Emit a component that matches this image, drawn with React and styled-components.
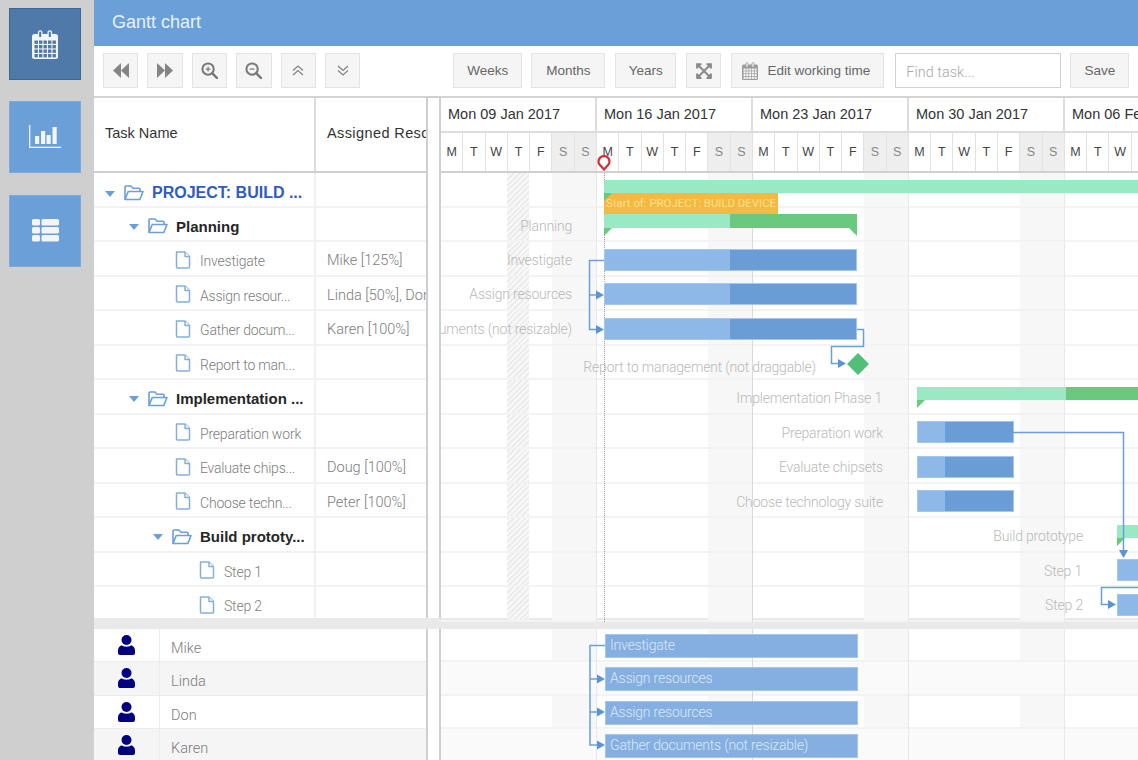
import React from "react";
import styled, { createGlobalStyle } from "styled-components";
import { FaExpandArrowsAlt } from "react-icons/fa";

const LIGHT_FONT = `"Roboto", "Liberation Sans", Arial, sans-serif`;

const GlobalStyle = createGlobalStyle`
  html, body { margin: 0; padding: 0; height: 100%; overflow: hidden; }
  body { font-family: "Liberation Sans", Arial, sans-serif; background: #fff; }
`;

const Page = styled.div`
  display: flex;
  width: 1138px;
  height: 760px;
  overflow: hidden;
`;
const Sidebar = styled.nav`
  width: 94px;
  flex: none;
  background: #cfcfcf;
  padding: 8px 0 0 9px;
  box-sizing: border-box;
  display: flex;
  flex-direction: column;
  gap: 21.3px;
`;
const SideButton = styled.button`
  width: 72px;
  height: 72px;
  padding: 0;
  display: flex;
  align-items: center;
  justify-content: center;
  color: #f2f5f9;
  background: ${(p) => (p.$active ? "#4f79a8" : "#6a9fd8")};
  border: 1px solid ${(p) => (p.$active ? "#3f6593" : "#7fa9da")};
  box-sizing: border-box;
`;
const Main = styled.main`
  flex: 1;
  min-width: 0;
  display: flex;
  flex-direction: column;
`;
const Header = styled.header`
  height: 46px;
  flex: none;
  background: #6a9fd8;
  color: #e9f1fa;
  font-size: 18px;
  line-height: 44px;
  padding-left: 18px;
`;
const Toolbar = styled.div`
  height: 50px;
  flex: none;
  box-sizing: border-box;
  padding: 7px 9px 0 9px;
  display: flex;
  align-items: flex-start;
`;
const ToolButton = styled.button`
  height: 35px;
  width: ${(p) => p.$w || 35.4}px;
  margin-right: ${(p) => (p.$gap === undefined ? 9 : p.$gap)}px;
  padding: 0 ${(p) => p.$pad || 0}px 0 0;
  display: inline-flex;
  align-items: center;
  justify-content: center;
  gap: 9px;
  background: #f5f5f5;
  border: 1px solid #e3e3e3;
  color: #666;
  font: 13.5px "Liberation Sans", Arial, sans-serif;
  box-sizing: border-box;
  flex: none;
`;
const Spacer = styled.div`
  width: 84px;
  flex: none;
`;
const Search = styled.input`
  width: 166px;
  height: 35px;
  margin: 0 9px 0 1px;
  box-sizing: border-box;
  border: 1.5px solid #d2d2d2;
  padding: 3px 10px 0;
  font: 300 14.5px ${LIGHT_FONT};
  background: #fff;
  outline: none;
  flex: none;
  &::placeholder { color: #a8a8a8; opacity: 1; }
`;

const Upper = styled.div`
  display: grid;
  grid-template-columns: 332px 15px 1fr;
  height: 522px;
  flex: none;
`;
const Lower = styled.div`
  display: grid;
  grid-template-columns: 332px 15px 1fr;
  flex: 1;
  min-height: 0;
`;
const Band = styled.div`
  height: 11px;
  flex: none;
  background: #e9e9e9;
`;
const Splitter = styled.div`
  border-left: 2px solid #cfcfcf;
  border-right: 2px solid #cfcfcf;
  border-top: ${(p) => (p.$top ? "2px solid #cfcfcf" : "none")};
  box-sizing: border-box;
  background: #fff;
  width: 15px;
`;
const Table = styled.div`
  display: flex;
  flex-direction: column;
  min-width: 0;
`;
const TableHead = styled.div`
  display: flex;
  height: 77px;
  flex: none;
  box-sizing: border-box;
  border-top: 2px solid #d4d4d4;
  border-bottom: 2px solid #cfcfcf;
`;
const HeadCell = styled.div`
  width: ${(p) => p.$w}px;
  flex: none;
  box-sizing: border-box;
  padding-left: 11px;
  padding-bottom: 3px;
  display: flex;
  align-items: center;
  white-space: nowrap;
  overflow: hidden;
  font-size: 14.5px;
  letter-spacing: ${(p) => p.$track || 0}px;
  color: #333;
  border-right: ${(p) => (p.$line ? "2px solid #dcdcdc" : "none")};
`;
const Row = styled.div`
  display: flex;
  height: 34.5px;
  flex: none;
  box-sizing: border-box;
  border-bottom: 2px solid #f2f2f2;
`;
const NameCell = styled.div`
  width: 222px;
  flex: none;
  box-sizing: border-box;
  border-right: 2px solid #f0f0f0;
  padding-left: ${(p) => p.$indent}px;
  padding-top: ${(p) => (p.$root ? 8 : p.$group ? 5 : 3)}px;
  display: flex;
  align-items: center;
  white-space: nowrap;
  overflow: hidden;
`;
const ResourceCell = styled.div`
  flex: 1;
  min-width: 0;
  padding: 5px 0 0 11px;
  display: flex;
  align-items: center;
  white-space: nowrap;
  overflow: hidden;
  font: 300 14.5px ${LIGHT_FONT};
  color: #7c7c7c;
`;
const Caret = styled.span`
  width: 0;
  height: 0;
  flex: none;
  border-left: 5.5px solid transparent;
  border-right: 5.5px solid transparent;
  border-top: 6px solid #6a9fd8;
  margin: 1px 9px 0 0;
`;
const GroupName = styled.span`
  font-size: ${(p) => (p.$root ? 16 : 15)}px;
  font-weight: 700;
  color: ${(p) => (p.$root ? "#2f5bc4" : "#262626")};
  margin-left: 8px;
`;
const LeafName = styled.span`
  font: 300 14px ${LIGHT_FONT};
  letter-spacing: -0.2px;
  color: #7c7c7c;
  margin-left: 9px;
  padding-top: 3px;
`;
const PersonRow = styled.div`
  display: flex;
  height: 33.3px;
  flex: none;
  box-sizing: border-box;
  background: ${(p) => (p.$alt ? "#f5f5f5" : "#fff")};
  border-bottom: 1.5px solid #ececec;
`;
const PersonIcon = styled.div`
  width: 66px;
  flex: none;
  box-sizing: border-box;
  border-right: 1.5px solid #ececec;
  display: flex;
  justify-content: center;
  padding: 6px 0 0 0;
`;
const PersonName = styled.div`
  padding: 11px 0 0 11px;
  font: 300 14.5px ${LIGHT_FONT};
  color: #7c7c7c;
`;

const Chart = styled.div`
  display: flex;
  flex-direction: column;
  min-width: 0;
  position: relative;
  overflow: hidden;
`;
const Weeks = styled.div`
  display: flex;
  height: 37px;
  flex: none;
  box-sizing: border-box;
  border-top: 2px solid #d4d4d4;
  border-bottom: 2px solid #dcdcdc;
`;
const WeekCell = styled.div`
  width: 156px;
  flex: none;
  box-sizing: border-box;
  padding-left: 7px;
  font-size: 14.5px;
  line-height: 32px;
  color: #333;
  white-space: nowrap;
  border-right: 2px solid #dcdcdc;
`;
const Days = styled.div`
  display: flex;
  height: 40px;
  flex: none;
  box-sizing: border-box;
  border-bottom: 2px solid #cfcfcf;
`;
const DayCell = styled.div`
  width: 22.2857px;
  flex: none;
  box-sizing: border-box;
  text-align: center;
  font-size: 12.5px;
  line-height: 38px;
  color: ${(p) => (p.$off ? "#888" : "#444")};
  background: ${(p) => (p.$off ? "#eeeeee" : "#fff")};
  border-right: 1.5px solid #e2e2e2;
`;
const Canvas = styled.div`
  position: relative;
  flex: 1;
  min-height: 0;
  overflow: hidden;
`;
const GridRow = styled.div`
  height: 34.5px;
  box-sizing: border-box;
  border-bottom: 2px solid #f3f3f3;
  background: ${(p) => (p.$alt ? "#fafafa" : "transparent")};
`;
const GridRowLow = styled(GridRow)`
  height: 33.3px;
`;
const Backdrop = styled.div`
  position: absolute;
  top: 0;
  bottom: 0;
  left: ${(p) => p.$x}px;
  width: ${(p) => p.$w}px;
`;
const Weekend = styled(Backdrop)`
  background: #f7f7f7;
  z-index: -1;
`;
const Hatch = styled(Backdrop)`
  z-index: -1;
  background: repeating-linear-gradient(135deg, #ececec 0 2px, #f8f8f8 2px 4px);
`;
const WeekLine = styled(Backdrop)`
  width: 1.2px;
  background: ${(p) => p.$c || "#e8e8e8"};
`;
const TodayLine = styled(Backdrop)`
  width: 0;
  border-left: 1px dotted #9a9a9a;
`;
const Layer = styled.div`
  position: relative;
  height: 100%;
  z-index: 0;
`;
const Bar = styled.div`
  position: absolute;
  left: ${(p) => p.$x}px;
  top: ${(p) => p.$y}px;
  width: ${(p) => p.$w}px;
  height: ${(p) => p.$h}px;
  box-sizing: border-box;
  background: ${(p) => p.$c};
`;
const TaskBar = styled(Bar)`
  border: 1px solid #a3c6ec;
`;
const Progress = styled(Bar)`
  border: 0;
  top: 0;
  left: ${(p) => p.$x}px;
  height: 100%;
`;
const ResourceBar = styled(Bar)`
  background: #85afe0;
  border: 1px solid #a3c6ec;
  color: #dbe8f7;
  font: 300 14px/21px ${LIGHT_FONT};
  letter-spacing: -0.2px;
  padding-left: 4px;
  white-space: nowrap;
`;
const StartTip = styled(Bar)`
  background: #f4b942;
  color: #fbe08e;
  font: 400 11.4px/21px ${LIGHT_FONT};
  padding-left: 2px;
  white-space: nowrap;
`;
const BarLabel = styled.div`
  position: absolute;
  right: ${(p) => p.$right}px;
  top: ${(p) => p.$y}px;
  font: 300 14px/16px ${LIGHT_FONT};
  letter-spacing: -0.18px;
  color: #b9b9b9;
  white-space: nowrap;
`;
const Overlay = styled.svg`
  position: absolute;
  left: 0;
  top: 0;
  pointer-events: none;
`;
const TodayPin = styled.svg`
  position: absolute;
  left: 156px;
  top: 59px;
  z-index: 3;
`;

const Calendar = ({ width = 26, height = 29, body = "#f2f5f9", cell = "#4f79a8" }) => (
  <svg width={width} height={height} viewBox="0 0 26 29">
    <rect x="0" y="4" width="26" height="25" rx="2.5" fill={body} />
    <path d="M6.5 7V2.5a1.7 1.7 0 0 1 3.4 0V7M16.1 7V2.5a1.7 1.7 0 0 1 3.4 0V7" fill={cell} stroke={body} strokeWidth="1.3" />
    {[10.5, 15, 19.5, 24].map((y) =>
      [2.5, 7, 11.5, 16, 20.5].map((x) => (
        <rect key={x + "-" + y} x={x} y={y} width="3.4" height="3.4" fill={cell} />
      ))
    )}
  </svg>
);

const BarChart = () => (
  <svg width="32" height="24" viewBox="0 0 32 24" fill="#f2f5f9">
    <rect x="0" y="0" width="1.3" height="23" />
    <rect x="0" y="21.7" width="32" height="1.3" />
    <rect x="6" y="11" width="4.2" height="8" />
    <rect x="12" y="6" width="4.2" height="13" />
    <rect x="17.5" y="10" width="4.2" height="9" />
    <rect x="23.5" y="2" width="4.2" height="17" />
  </svg>
);

const ListIcon = () => (
  <svg width="27" height="23" viewBox="0 0 27 23" fill="#f2f5f9">
    {[0, 8, 16].map((y) => (
      <g key={y}>
        <rect x="0" y={y} width="8" height="6.4" rx="1.5" />
        <rect x="9.5" y={y} width="17.5" height="6.4" rx="1.5" />
      </g>
    ))}
  </svg>
);

const Rewind = ({ flip }) => (
  <svg width="16" height="15" viewBox="0 0 16 15" fill="#858585" style={flip ? { transform: "scaleX(-1)" } : undefined}>
    <path d="M8 0v15L0 7.5zM16 0v15L8 7.5z" />
  </svg>
);

const Magnifier = ({ minus }) => (
  <svg width="17" height="17" viewBox="0 0 18 18" fill="none" stroke="#7a7a7a">
    <circle cx="7.5" cy="7.5" r="6" strokeWidth="2.2" />
    <path d="M12 12l5 5" strokeWidth="2.6" strokeLinecap="round" />
    <path d={minus ? "M5 7.5h5" : "M5 7.5h5M7.5 5v5"} strokeWidth="1.3" />
  </svg>
);

const DoubleChevron = ({ down }) => (
  <svg width="12" height="11" viewBox="0 0 12 11" fill="none" stroke="#808080" strokeWidth="1.2" style={down ? { transform: "scaleY(-1)" } : undefined}>
    <path d="M1 5.5L6 1l5 4.5M1 10L6 5.5 11 10" />
  </svg>
);

const FolderOpen = () => (
  <svg width="20" height="16" viewBox="0 0 20 16" fill="none" stroke="#6a9fd8" strokeWidth="1.6" strokeLinejoin="round" style={{ flex: "none" }}>
    <path d="M1 14.5V2a1 1 0 0 1 1-1h5l2 2.2h6a1 1 0 0 1 1 1V6.5" />
    <path d="M1 14.5L4.2 6.5H19l-3.2 8z" />
  </svg>
);

const FileIcon = () => (
  <svg width="16" height="18" viewBox="0 0 16 18" fill="#fff" stroke="#85aedc" strokeWidth="1.5" strokeLinejoin="round" style={{ flex: "none" }}>
    <path d="M1.5 1h8.5l4.5 4.5V16a1 1 0 0 1-1 1h-11a1 1 0 0 1-1-1z" />
    <path d="M10 1v4.5h4.5" />
  </svg>
);

const Person = () => (
  <svg width="17" height="20" viewBox="0 0 17 20" fill="#000080">
    <circle cx="8.5" cy="5" r="5" />
    <path d="M0 15.5c0-3 2.2-5 4-5 1.2.8 2.8 1.2 4.5 1.2s3.3-.4 4.5-1.2c1.800 0 4 2 4 5V18a2 2 0 0 1-2 2H2a2 2 0 0 1-2-2z" />
  </svg>
);

const tasks = [
  { name: "PROJECT: BUILD ...", root: true, indent: 11 },
  { name: "Planning", group: true, indent: 35 },
  { name: "Investigate", indent: 81, who: "Mike [125%]" },
  { name: "Assign resour...", indent: 81, who: "Linda [50%], Don [50%]" },
  { name: "Gather docum...", indent: 81, who: "Karen [100%]" },
  { name: "Report to man...", indent: 81 },
  { name: "Implementation ...", group: true, indent: 35 },
  { name: "Preparation work", indent: 81 },
  { name: "Evaluate chips...", indent: 81, who: "Doug [100%]" },
  { name: "Choose techn...", indent: 81, who: "Peter [100%]" },
  { name: "Build prototy...", group: true, indent: 59 },
  { name: "Step 1", indent: 105 },
  { name: "Step 2", indent: 105 },
];
const people = ["Mike", "Linda", "Don", "Karen"];
const weeks = ["Mon 09 Jan 2017", "Mon 16 Jan 2017", "Mon 23 Jan 2017", "Mon 30 Jan 2017", "Mon 06 Feb 2017"];
const letters = ["M", "T", "W", "T", "F", "S", "S"];
const offs = [111, 267, 423, 579];
const lines = [{ x: 155 }, { x: 311, c: "#d9d9d9" }, { x: 467 }, { x: 623 }];

// chart coordinates: page x - 441, page y - 173
const labels = [
  { text: "Planning", end: 131, y: 45 },
  { text: "Investigate", end: 131, y: 79 },
  { text: "Assign resources", end: 131, y: 113 },
  { text: "Gather documents (not resizable)", end: 131, y: 148 },
  { text: "Report to management (not draggable)", end: 375, y: 186 },
  { text: "Implementation Phase 1", end: 441, y: 217 },
  { text: "Preparation work", end: 442, y: 252 },
  { text: "Evaluate chipsets", end: 442, y: 286 },
  { text: "Choose technology suite", end: 442, y: 321 },
  { text: "Build prototype", end: 642, y: 355 },
  { text: "Step 1", end: 641, y: 390 },
  { text: "Step 2", end: 642, y: 424 },
];
const taskBars = [
  { x: 163, y: 76, w: 253, split: 125 },
  { x: 163, y: 110, w: 253, split: 125 },
  { x: 163, y: 145, w: 253, split: 125 },
  { x: 476, y: 248, w: 96.5, split: 27 },
  { x: 476, y: 283, w: 96.5, split: 27 },
  { x: 476, y: 317, w: 96.5, split: 27 },
  { x: 676, y: 386, w: 60 },
  { x: 676, y: 421, w: 60 },
];
const summaries = [
  { x: 163, y: 7, w: 534, h: 13 },
  { x: 163, y: 41, w: 126, h: 14 },
  { x: 289, y: 41, w: 127, h: 14, dark: true },
  { x: 476, y: 214, w: 149, h: 13 },
  { x: 625, y: 214, w: 72, h: 13, dark: true },
  { x: 676, y: 352, w: 21, h: 13 },
];
const LIGHT = "#9ae9c5";
const DARK = "#68c97f";

const ChartBackdrop = ({ hatch }) => (
  <>
    {offs.map((x) => (
      <Weekend key={x} $x={x} $w={44} />
    ))}
    {hatch && <Hatch $x={66} $w={22} />}
    {lines.map((l) => (
      <WeekLine key={l.x} $x={l.x} $c={l.c} />
    ))}
  </>
);

const Arrow = ({ x, y, down }) =>
  down ? (
    <path d={`M${x - 4.5} ${y}h9l-4.5 8z`} fill="#5b94d3" />
  ) : (
    <path d={`M${x} ${y - 4.5}v9l8-4.5z`} fill="#5b94d3" />
  );

export default function App() {
  return (
    <Page>
      <GlobalStyle />
      <Sidebar>
        <SideButton $active aria-label="Gantt">
          <Calendar />
        </SideButton>
        <SideButton aria-label="Charts">
          <BarChart />
        </SideButton>
        <SideButton aria-label="List">
          <ListIcon />
        </SideButton>
      </Sidebar>
      <Main>
        <Header>Gantt chart</Header>
        <Toolbar>
          <ToolButton aria-label="Back"><Rewind /></ToolButton>
          <ToolButton aria-label="Forward"><Rewind flip /></ToolButton>
          <ToolButton aria-label="Zoom in"><Magnifier /></ToolButton>
          <ToolButton aria-label="Zoom out"><Magnifier minus /></ToolButton>
          <ToolButton aria-label="Up"><DoubleChevron /></ToolButton>
          <ToolButton aria-label="Down"><DoubleChevron down /></ToolButton>
          <Spacer />
          <ToolButton $w={69}>Weeks</ToolButton>
          <ToolButton $w={74} $gap={10}>Months</ToolButton>
          <ToolButton $w={61} $gap={10}>Years</ToolButton>
          <ToolButton $w={35} $gap={10} aria-label="Full screen"><FaExpandArrowsAlt size={18} color="#8a8a8a" /></ToolButton>
          <ToolButton $w={153} $gap={10} $pad={3}>
            <Calendar width={16} height={18} body="#9c9c9c" cell="#f5f5f5" />
            Edit working time
          </ToolButton>
          <Search placeholder="Find task..." />
          <ToolButton $w={59} $gap={0}>Save</ToolButton>
        </Toolbar>

        <Upper>
          <Table>
            <TableHead>
              <HeadCell $w={222} $line>Task Name</HeadCell>
              <HeadCell $w={110} $track={0.4}>Assigned Resources</HeadCell>
            </TableHead>
            {tasks.map((t) => (
              <Row key={t.name}>
                <NameCell $indent={t.indent} $root={t.root} $group={t.group}>
                  {t.root || t.group ? (
                    <>
                      <Caret />
                      <FolderOpen />
                      <GroupName $root={t.root}>{t.name}</GroupName>
                    </>
                  ) : (
                    <>
                      <FileIcon />
                      <LeafName>{t.name}</LeafName>
                    </>
                  )}
                </NameCell>
                <ResourceCell>{t.who}</ResourceCell>
              </Row>
            ))}
          </Table>
          <Splitter $top />
          <Chart>
            <Weeks>
              {weeks.map((w) => (
                <WeekCell key={w}>{w}</WeekCell>
              ))}
            </Weeks>
            <Days>
              {weeks.flatMap((w) =>
                letters.map((l, i) => (
                  <DayCell key={w + i} $off={i > 4}>{l}</DayCell>
                ))
              )}
            </Days>
            <Canvas>
              <Layer>
                {tasks.map((t) => (
                  <GridRow key={t.name} />
                ))}
                <ChartBackdrop hatch />
                <TodayLine $x={163} />
                {labels.map((l) => (
                  <BarLabel key={l.text} $right={697 - l.end} $y={l.y}>{l.text}</BarLabel>
                ))}
                {summaries.map((s) => (
                  <Bar key={s.x + "-" + s.y} $x={s.x} $y={s.y} $w={s.w} $h={s.h} $c={s.dark ? DARK : LIGHT} />
                ))}
                {taskBars.map((b) => (
                  <TaskBar key={b.y} $x={b.x} $y={b.y} $w={b.w} $h={22} $c="#8db8e8">
                    {b.split && <Progress $x={b.split} $y={0} $w={b.w - b.split - 2} $c="#6a9dd6" />}
                  </TaskBar>
                ))}
                <StartTip $x={163} $y={20} $w={174} $h={21}>Start of: PROJECT: BUILD DEVICE</StartTip>
                <Overlay width="697" height="445" viewBox="0 0 697 445">
                  <g fill="#68c97f">
                    <path d="M163 20h8l-8 8z" />
                    <path d="M163 55h8l-8 8z" />
                    <path d="M416 55h-8l8 8z" />
                    <path d="M476 227h8l-8 8z" />
                    <path d="M676 365h8l-8 8z" />
                  </g>
                  <path d="M417 180l11 11-11 11-11-11z" fill="#52bf78" />
                  <g fill="none" stroke="#6a9fd8" strokeWidth="1.5">
                    <path d="M163 87.5H148.5V156.5H155" />
                    <path d="M148.5 122H155" />
                    <path d="M416 156.5H422.5V173.5H390.5V190.5H397" />
                    <path d="M572 259.5H682.5V377" />
                    <path d="M697 414.5H660.5V431.5H667" />
                  </g>
                  <Arrow x={155} y={122} />
                  <Arrow x={155} y={156.5} />
                  <Arrow x={397} y={190.5} />
                  <Arrow x={682.5} y={377} down />
                  <Arrow x={667} y={431.5} />
                </Overlay>
              </Layer>
            </Canvas>
            <TodayPin width="14" height="16" viewBox="0 0 14 16">
              <path d="M7 14.5L2.5 9.5A5 5 0 0 1 1.5 6.5 5.5 5.5 0 0 1 12.5 6.5 5 5 0 0 1 11.5 9.5z" fill="#fff" stroke="#d0343a" strokeWidth="2.3" />
            </TodayPin>
          </Chart>
        </Upper>
        <Band />
        <Lower>
          <Table>
            {people.map((p, i) => (
              <PersonRow key={p} $alt={i % 2 === 1}>
                <PersonIcon>
                  <Person />
                </PersonIcon>
                <PersonName>{p}</PersonName>
              </PersonRow>
            ))}
          </Table>
          <Splitter />
          <Chart>
            <Canvas>
              <Layer>
                {people.map((p, i) => (
                  <GridRowLow key={p} $alt={i % 2 === 1} />
                ))}
                <ChartBackdrop />
                <ResourceBar $x={164} $y={5} $w={252.5} $h={24}>Investigate</ResourceBar>
                <ResourceBar $x={164} $y={38} $w={252.5} $h={24}>Assign resources</ResourceBar>
                <ResourceBar $x={164} $y={71.5} $w={252.5} $h={24}>Assign resources</ResourceBar>
                <ResourceBar $x={164} $y={105} $w={252.5} $h={24}>Gather documents (not resizable)</ResourceBar>
                <Overlay width="697" height="131" viewBox="0 0 697 131">
                  <g fill="none" stroke="#6a9fd8" strokeWidth="1.5">
                    <path d="M164 16.5H149V116H156" />
                    <path d="M149 50H156M149 83H156" />
                  </g>
                  <Arrow x={156} y={50} />
                  <Arrow x={156} y={83} />
                  <Arrow x={156} y={116} />
                </Overlay>
              </Layer>
            </Canvas>
          </Chart>
        </Lower>
      </Main>
    </Page>
  );
}
